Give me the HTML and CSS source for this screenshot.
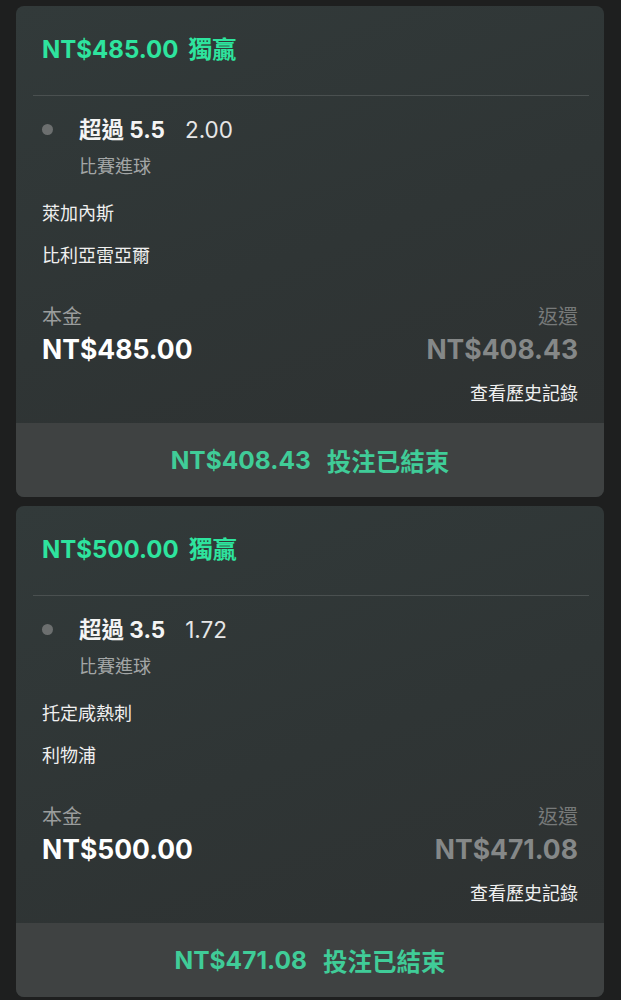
FILE: index.html
```html
<!DOCTYPE html>
<html lang="zh-Hant">
<head>
<meta charset="utf-8">
<link rel="stylesheet" href="styles.css">
</head>
<body>
<div class="list">
  <div class="card">
    <div class="title">NT$485.00<span class="bet-type">獨贏</span></div>
    <div class="divider"></div>
    <div class="sel">
      <span class="dot"></span>
      <div class="sel-body">
        <div class="sel-line"><span class="pick">超過 5.5</span><span class="odds">2.00</span></div>
        <div class="market">比賽進球</div>
      </div>
    </div>
    <div class="team team-first">萊加內斯</div>
    <div class="team">比利亞雷亞爾</div>
    <div class="amounts">
      <div class="col">
        <div class="lbl">本金</div>
        <div class="amt">NT$485.00</div>
      </div>
      <div class="col col-right">
        <div class="lbl lbl-dim">返還</div>
        <div class="amt amt-dim">NT$408.43</div>
      </div>
    </div>
    <div class="history">查看歷史記錄</div>
    <div class="footer"><span>NT$408.43</span><span class="status">投注已結束</span></div>
  </div>
  <div class="card">
    <div class="title">NT$500.00<span class="bet-type">獨贏</span></div>
    <div class="divider"></div>
    <div class="sel">
      <span class="dot"></span>
      <div class="sel-body">
        <div class="sel-line"><span class="pick">超過 3.5</span><span class="odds">1.72</span></div>
        <div class="market">比賽進球</div>
      </div>
    </div>
    <div class="team team-first">托定咸熱刺</div>
    <div class="team">利物浦</div>
    <div class="amounts">
      <div class="col">
        <div class="lbl">本金</div>
        <div class="amt">NT$500.00</div>
      </div>
      <div class="col col-right">
        <div class="lbl lbl-dim">返還</div>
        <div class="amt amt-dim">NT$471.08</div>
      </div>
    </div>
    <div class="history">查看歷史記錄</div>
    <div class="footer"><span>NT$471.08</span><span class="status">投注已結束</span></div>
  </div>
</div>
</body>
</html>
```
FILE: styles.css
```css
html, body {
  margin: 0;
  padding: 0;
  background: #1e1f1f;
}
body {
  font-family: Inter, "Noto Sans CJK TC", sans-serif;
  color: #f2f2f2;
  width: 621px;
  height: 1000px;
  overflow: hidden;
}
.list {
  display: flex;
  flex-direction: column;
  gap: 9px;
  padding: 6px 17px 0 16px;
}
.card {
  height: 491px;
  border-radius: 8px;
  overflow: hidden;
  background: linear-gradient(160deg, #323a3a 0%, #2f3535 50%, #2e3131 100%);
  display: flex;
  flex-direction: column;
}
.title {
  color: #2ee49e;
  font-weight: bold;
  font-size: 24px;
  line-height: 30px;
  padding: 29px 0 0 26px;
  height: 30px;
}
.bet-type {
  margin-left: 10px;
}
.divider {
  height: 1px;
  background: #4a5050;
  margin: 30px 15px 0 17px;
}
.sel {
  display: flex;
  align-items: flex-start;
  padding: 21px 0 0 26px;
}
.dot {
  width: 11px;
  height: 11px;
  border-radius: 50%;
  background: #6c6f6f;
  margin-top: 7px;
}
.sel-body {
  margin-left: 26px;
}
.sel-line {
  font-size: 22.5px;
  line-height: 26px;
  height: 26px;
}
.pick {
  font-weight: bold;
  color: #f4f4f4;
}
.odds {
  margin-left: 20px;
  color: #e6e6e6;
}
.market {
  color: #a3a6a6;
  font-size: 18px;
  line-height: 22px;
  margin-top: 13px;
}
.team {
  font-size: 18px;
  line-height: 24px;
  color: #f0f0f0;
  padding-left: 26px;
  margin-top: 18px;
}
.team-first {
  margin-top: 24px;
}
.amounts {
  display: flex;
  justify-content: space-between;
  padding: 0 26px;
  margin-top: 37px;
}
.col-right {
  text-align: right;
}
.lbl {
  font-size: 20px;
  line-height: 24px;
  color: #9a9d9d;
}
.lbl-dim {
  color: #777a7a;
}
.amt {
  font-size: 26.5px;
  line-height: 32px;
  font-weight: bold;
  color: #ffffff;
  margin-top: 4px;
}
.amt-dim {
  color: #858888;
}
.history {
  text-align: right;
  padding-right: 26px;
  font-size: 18px;
  line-height: 24px;
  color: #f0f0f0;
  margin-top: 17px;
}
.footer {
  margin-top: auto;
  height: 74px;
  background: #3f4242;
  color: #40cc98;
  font-weight: bold;
  font-size: 24.5px;
  display: flex;
  align-items: center;
  justify-content: center;
}
.status {
  margin-left: 16px;
}
```
